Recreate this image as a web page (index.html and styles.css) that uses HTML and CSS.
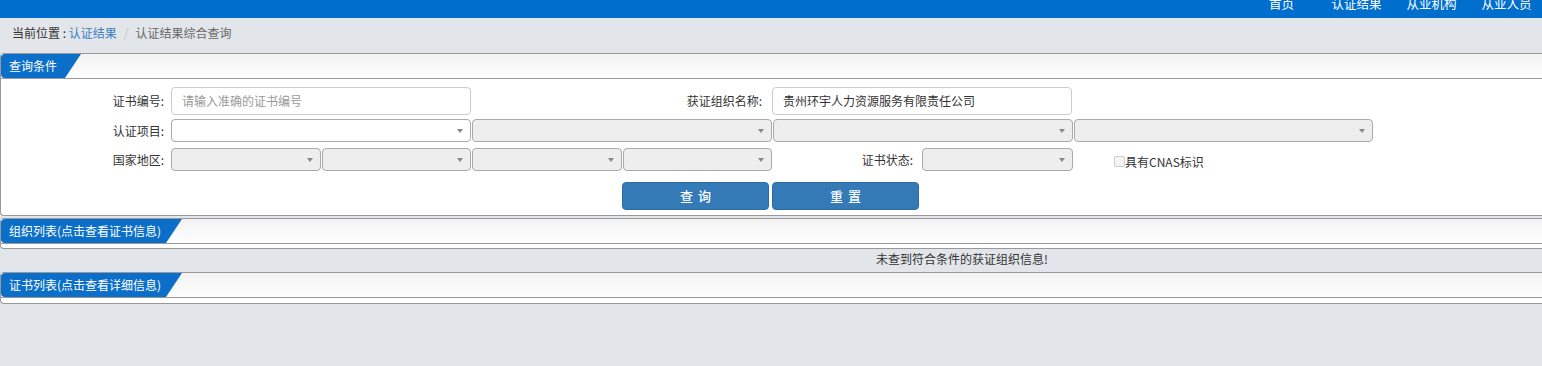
FILE: index.html
```html
<!DOCTYPE html>
<html lang="zh-CN">
<head>
<meta charset="utf-8">
<title>认证结果综合查询</title>
<link rel="stylesheet" href="styles.css">
</head>
<body>
<header class="topbar">
  <nav class="nav">
    <a href="#">首页</a>
    <a href="#">认证结果</a>
    <a href="#">从业机构</a>
    <a href="#">从业人员</a>
  </nav>
</header>
<div class="crumb">
  <span class="c-label">当前位置 : </span><a class="c-link" href="#">认证结果</a><span class="c-sep">/</span><span class="c-cur">认证结果综合查询</span>
</div>
<main class="main">
  <section class="panel">
    <div class="panel-head"><span class="tab tab-s">查询条件</span></div>
    <div class="form">
      <div class="row r1">
        <label class="lab l1">证书编号:</label>
        <div class="input ph">请输入准确的证书编号</div>
        <label class="lab l2">获证组织名称:</label>
        <div class="input">贵州环宇人力资源服务有限责任公司</div>
      </div>
      <div class="row r2">
        <label class="lab l1">认证项目:</label>
        <div class="sel on w300"></div>
        <div class="sel w300"></div>
        <div class="sel w300"></div>
        <div class="sel w299"></div>
      </div>
      <div class="row r3">
        <label class="lab l1">国家地区:</label>
        <div class="sel w150"></div>
        <div class="sel w149"></div>
        <div class="sel w150"></div>
        <div class="sel w149"></div>
        <label class="lab l3">证书状态:</label>
        <div class="sel w151"></div>
        <label class="chk"><span class="box"></span>具有CNAS标识</label>
      </div>
      <div class="row r4">
        <button class="btn">查询</button>
        <button class="btn">重置</button>
      </div>
    </div>
  </section>
  <section class="panel p2">
    <div class="panel-head"><span class="tab tab-l">组织列表(点击查看证书信息)</span></div>
    <div class="panel-body b4"></div>
  </section>
  <div class="msg">未查到符合条件的获证组织信息!</div>
  <section class="panel">
    <div class="panel-head"><span class="tab tab-l">证书列表(点击查看详细信息)</span></div>
    <div class="panel-body b5"></div>
  </section>
</main>
</body>
</html>
```
FILE: styles.css
```css
html, body {
  overflow: hidden;
}
body {
  margin: 0;
  background: #e2e6ea;
  font-family: "Noto Sans CJK SC", "Liberation Sans", sans-serif;
  font-size: 12px;
  color: #333;
}
.topbar {
  height: 18px;
  background: #006ecd;
  overflow: hidden;
  display: flex;
  justify-content: flex-end;
}
.nav {
  display: flex;
  margin-right: -2px;
  margin-top: -3px;
}
.nav a {
  width: 75px;
  text-align: center;
  color: #fff;
  font-size: 12.5px;
  line-height: 14px;
  text-decoration: none;
}
.crumb {
  height: 35px;
  line-height: 30px;
  padding-left: 12px;
  box-sizing: border-box;
}
.c-label { color: #333; }
.c-link { color: #3a7fc1; text-decoration: none; }
.c-sep { color: #c8c8c8; padding: 0 7px; }
.c-cur { color: #666; }

.main {
  width: 1920px;
}
.panel {
  border: 1px solid #999;
  border-right: 0;
  border-radius: 4px 0 0 4px;
  background: #fff;
}
.p2 {
  margin-top: 2px;
}
.panel-head {
  height: 24px;
  border-bottom: 1px solid #999;
  background: linear-gradient(#f3f3f3, #fefefe);
  display: flex;
}
.tab {
  height: 24px;
  line-height: 24px;
  padding-left: 8px;
  box-sizing: border-box;
  background: #0b6fc9;
  color: #fff;
  border-radius: 4px 0 0 4px;
  clip-path: polygon(0 0, 100% 0, calc(100% - 16px) 100%, 0 100%);
  white-space: nowrap;
}
.tab-s { width: 80px; }
.tab-l { width: 181px; }
.panel-body.b4 { height: 4px; }
.panel-body.b5 { height: 5px; }

.form {
  padding: 8px 0 5px;
}
.row {
  display: flex;
  align-items: center;
}
.r1 { height: 28px; }
.r2 { height: 23px; margin-top: 4px; }
.r3 { height: 23px; margin-top: 6px; }
.r4 { height: 28px; margin-top: 11px; padding-left: 621px; gap: 3px; }

.lab {
  flex: none;
  text-align: right;
  box-sizing: border-box;
  line-height: 16px;
}
.l1 { width: 170px; padding-right: 7px; }
.l2 { width: 301px; padding-right: 10px; }
.l3 { width: 149px; padding-right: 9px; }

.input {
  flex: none;
  width: 300px;
  height: 28px;
  box-sizing: border-box;
  border: 1px solid #ccc;
  border-radius: 4px;
  padding-left: 10px;
  line-height: 26px;
  color: #333;
}
.input.ph { color: #999; }

.sel {
  flex: none;
  height: 23px;
  box-sizing: border-box;
  border: 1px solid #aaa;
  border-radius: 4px;
  background: #eee;
  position: relative;
}
.sel::after {
  content: "";
  position: absolute;
  right: 7px;
  top: 9px;
  border-left: 3px solid transparent;
  border-right: 3px solid transparent;
  border-top: 4px solid #888;
}
.sel.on { background: #fff; }
.w300 { width: 300px; margin-right: 1px; }
.w299 { width: 299px; }
.w150 { width: 150px; margin-right: 1px; }
.w149 { width: 149px; margin-right: 1px; }
.w151 { width: 151px; }

.chk {
  margin-left: 41px;
  margin-top: 4px;
  display: flex;
  align-items: center;
  line-height: 16px;
  color: #333;
}
.box {
  width: 9px;
  height: 9px;
  border: 1px solid #ccc;
  border-radius: 2px;
  background: #f4f4f4;
  margin-right: 0;
}

.btn {
  width: 147px;
  height: 28px;
  border: 1px solid #2e6da4;
  border-radius: 4px;
  background: #337ab7;
  color: #fff;
  font-family: "Noto Sans CJK SC", sans-serif;
  font-size: 13px;
  font-weight: 500;
  letter-spacing: 5px;
  padding: 0 0 0 5px;
  line-height: 26px;
}
.msg {
  height: 23px;
  line-height: 19px;
  text-align: center;
  padding-left: 4px;
  box-sizing: border-box;
  color: #333;
}
```
